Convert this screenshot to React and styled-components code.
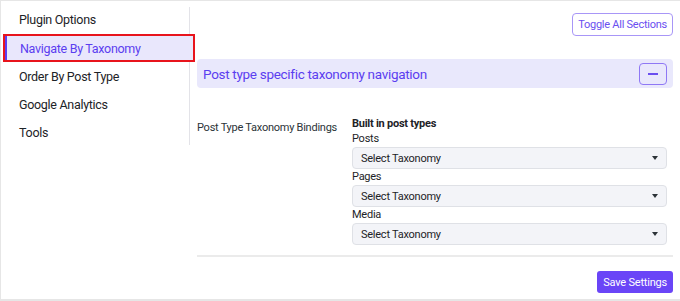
import React from "react";
import styled, { createGlobalStyle } from "styled-components";

const GlobalStyle = createGlobalStyle`
  html, body {
    margin: 0;
    padding: 0;
    background: #ffffff;
  }
  body {
    font-family: Roboto, "Noto Sans", "Liberation Sans", sans-serif;
    color: #1d2327;
  }
`;

const menuItems = [
  "Plugin Options",
  "Navigate By Taxonomy",
  "Order By Post Type",
  "Google Analytics",
  "Tools",
];

const bindings = ["Posts", "Pages", "Media"];

const App = () => {
  return (
    <>
      <GlobalStyle />
      <Frame>
        <Sidebar>
          {menuItems.map((item) => (
            <MenuItem key={item} active={item === "Navigate By Taxonomy"}>
              {item}
            </MenuItem>
          ))}
        </Sidebar>

        <Main>
          <TopBar>
            <OutlineButton>Toggle All Sections</OutlineButton>
          </TopBar>

          <SectionHeader>
            <SectionTitle>Post type specific taxonomy navigation</SectionTitle>
            <CollapseButton>
              <Dash />
            </CollapseButton>
          </SectionHeader>

          <FieldRow>
            <FieldLabel>Post Type Taxonomy Bindings</FieldLabel>
            <FieldBody>
              <GroupTitle>Built in post types</GroupTitle>
              {bindings.map((b) => (
                <Binding key={b}>
                  <SmallLabel>{b}</SmallLabel>
                  <Select>
                    <span>Select Taxonomy</span>
                    <Caret />
                  </Select>
                </Binding>
              ))}
            </FieldBody>
          </FieldRow>

          <Footer>
            <SaveButton>Save Settings</SaveButton>
          </Footer>
        </Main>
      </Frame>
    </>
  );
};

export default App;

const Frame = styled.div`
  display: flex;
  width: 680px;
  height: 301px;
  box-sizing: border-box;
  border-top: 1px solid #e6e6e6;
  border-left: 1px solid #e6e6e6;
  border-bottom: 2px solid #e6e6e6;
`;

const Sidebar = styled.div`
  width: 189px;
  align-self: flex-start;
  margin-top: 6px;
  padding: 0 0 0 4px;
  border-right: 1px solid #e3e3e8;
  display: flex;
  flex-direction: column;
  gap: 4px;
  height: 138px;
  box-sizing: border-box;
`;

const MenuItem = styled.div`
  height: 25px;
  display: flex;
  align-items: center;
  padding-left: 14px;
  font-size: 12.5px;
  letter-spacing: -0.3px;
  margin-right: -4px;
  color: ${(p) => (p.active ? "#5b3ef0" : "#1d2327")};
  background: ${(p) => (p.active ? "#e9e7fc" : "transparent")};
  box-sizing: border-box;
  ${(p) =>
    p.active &&
    `
    margin-top: 1px;
    height: 25px;
    padding-left: 13px;
    border-left: 2px solid #5b3ef0;
    outline: 2px solid #e8141c;
    outline-offset: 0;
    position: relative;
    z-index: 1;
  `}
`;

const Main = styled.div`
  flex: 1;
  display: flex;
  flex-direction: column;
  padding: 12px 7px 0 7px;
`;

const TopBar = styled.div`
  display: flex;
  justify-content: flex-end;
`;

const OutlineButton = styled.button`
  font-family: inherit;
  font-size: 11px;
  letter-spacing: -0.25px;
  color: #6a4ff0;
  background: #fff;
  border: 1px solid #a896f7;
  border-radius: 4px;
  height: 23px;
  padding: 0 5px;
  cursor: pointer;
`;

const SectionHeader = styled.div`
  margin-top: 23px;
  height: 29px;
  background: #e9e8fc;
  border-radius: 4px;
  display: flex;
  align-items: center;
  justify-content: space-between;
  padding: 0 6px 0 6px;
`;

const SectionTitle = styled.div`
  font-size: 13.5px;
  letter-spacing: -0.3px;
  color: #5b3ef0;
`;

const CollapseButton = styled.button`
  width: 28px;
  height: 22px;
  border: 1px solid #8f78f5;
  border-radius: 4px;
  background: transparent;
  display: flex;
  align-items: center;
  justify-content: center;
  padding: 0;
`;

const Dash = styled.span`
  width: 10px;
  height: 2px;
  background: #6a4ff0;
`;

const FieldRow = styled.div`
  display: flex;
  margin-top: 29px;
  padding-bottom: 10px;
  border-bottom: 2px solid #ebebeb;
`;

const FieldLabel = styled.div`
  width: 155px;
  font-size: 11px;
  letter-spacing: -0.25px;
  white-space: nowrap;
  color: #2c3338;
  padding-top: 4px;
`;

const FieldBody = styled.div`
  flex: 1;
  display: flex;
  flex-direction: column;
  padding-right: 6px;
  font-size: 11px;
  letter-spacing: -0.25px;
`;

const GroupTitle = styled.div`
  font-weight: 700;
  color: #1d2327;
  line-height: 14px;
`;

const Binding = styled.div`
  display: flex;
  flex-direction: column;
`;

const SmallLabel = styled.div`
  color: #1d2327;
  line-height: 16px;
`;

const Select = styled.div`
  height: 22px;
  box-sizing: border-box;
  background: #f3f4f8;
  border: 1px solid #dfe1e6;
  border-radius: 4px;
  display: flex;
  align-items: center;
  justify-content: space-between;
  padding: 0 8px 0 8px;
  color: #1d2327;
`;

const Caret = styled.span`
  width: 0;
  height: 0;
  border-left: 3px solid transparent;
  border-right: 3px solid transparent;
  border-top: 4px solid #2c3338;
`;

const Footer = styled.div`
  display: flex;
  justify-content: flex-end;
  margin-top: 14px;
`;

const SaveButton = styled.button`
  font-family: inherit;
  font-size: 11px;
  letter-spacing: -0.2px;
  color: #fff;
  background: #6a45f7;
  border: none;
  border-radius: 3px;
  height: 22px;
  padding: 0 6px;
`;
